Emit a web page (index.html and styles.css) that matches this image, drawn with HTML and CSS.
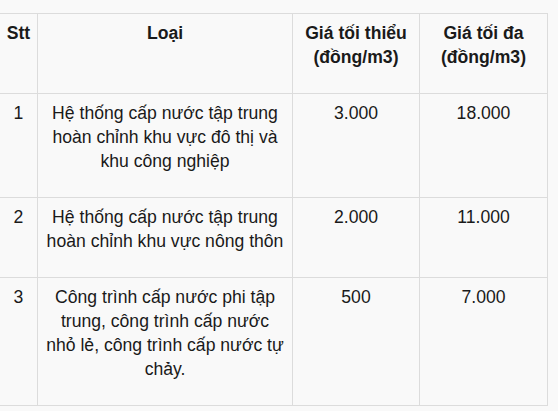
FILE: index.html
```html
<!DOCTYPE html>
<html lang="vi">
<head>
<meta charset="utf-8">
<link rel="stylesheet" href="styles.css">
</head>
<body>
<table class="price-table">
  <colgroup>
    <col class="c-stt">
    <col class="c-type">
    <col class="c-min">
    <col class="c-max">
  </colgroup>
  <thead>
    <tr>
      <th>Stt</th>
      <th>Loại</th>
      <th>Giá tối thiểu<br>(đồng/m3)</th>
      <th>Giá tối đa<br>(đồng/m3)</th>
    </tr>
  </thead>
  <tbody>
    <tr>
      <td>1</td>
      <td>Hệ thống cấp nước tập trung hoàn chỉnh khu vực đô thị và khu công nghiệp</td>
      <td>3.000</td>
      <td>18.000</td>
    </tr>
    <tr>
      <td>2</td>
      <td>Hệ thống cấp nước tập trung hoàn chỉnh khu vực nông thôn</td>
      <td>2.000</td>
      <td>11.000</td>
    </tr>
    <tr>
      <td>3</td>
      <td>Công trình cấp nước phi tập trung, công trình cấp nước<br>nhỏ lẻ, công trình cấp nước tự chảy.</td>
      <td>500</td>
      <td>7.000</td>
    </tr>
  </tbody>
</table>
</body>
</html>
```

FILE: styles.css
```css
html, body {
  margin: 0;
  padding: 0;
  background: #f9f9f9;
}
body {
  font-family: "Liberation Sans", Arial, sans-serif;
  font-size: 17.6px;
  line-height: 24px;
  color: #1a1a1a;
}
.price-table {
  border-collapse: collapse;
  table-layout: fixed;
  width: 548px;
  margin: 13px 0 0 -1px;
}
.c-stt { width: 38px; }
.c-type { width: 255px; }
.c-min { width: 127px; }
.c-max { width: 128px; }
.price-table th,
.price-table td {
  border: 1px solid #dcdcdc;
  padding: 7px 5px 24px;
  text-align: center;
  vertical-align: top;
}
.price-table th {
  font-weight: bold;
}
```
